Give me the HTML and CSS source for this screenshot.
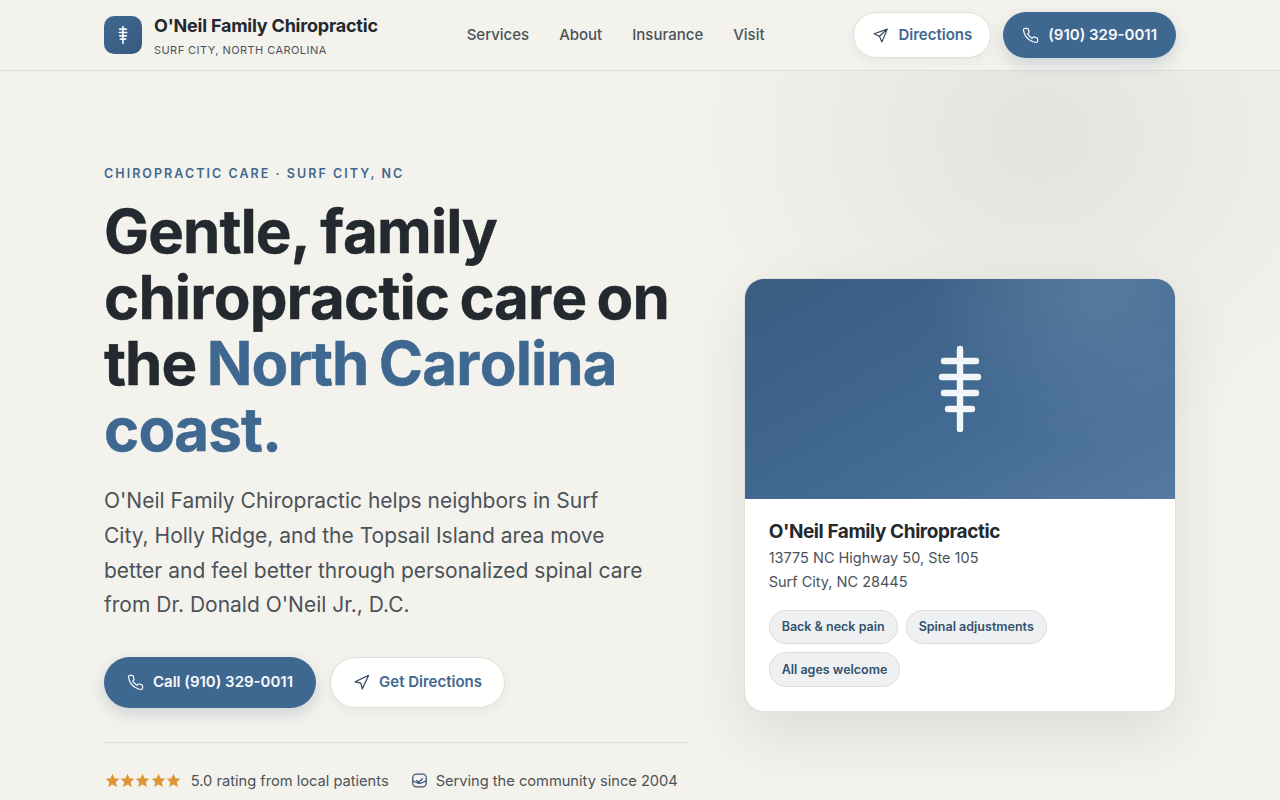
FILE: index.html
```html
<!DOCTYPE html>
<html lang="en">
<head>
<meta charset="utf-8">
<title>O'Neil Family Chiropractic</title>
<link rel="stylesheet" href="styles.css">
</head>
<body>
<svg class="defs" width="0" height="0" aria-hidden="true">
  <defs>
    <symbol id="phone" viewBox="0 0 24 24"><path d="M22 16.9v3a2 2 0 0 1-2.2 2 19.8 19.8 0 0 1-8.6-3.1 19.5 19.5 0 0 1-6-6 19.8 19.8 0 0 1-3.1-8.7A2 2 0 0 1 4.1 2h3a2 2 0 0 1 2 1.7c.1 1 .4 1.9.7 2.8a2 2 0 0 1-.5 2.1L8.1 9.9a16 16 0 0 0 6 6l1.3-1.3a2 2 0 0 1 2.1-.4c.9.3 1.8.6 2.8.7a2 2 0 0 1 1.7 2z"/></symbol>
    <symbol id="nav" viewBox="0 0 24 24"><path d="M3 11 22 2l-9 19-2-8-8-2z"/></symbol>
    <symbol id="send" viewBox="0 0 24 24"><path d="M21.5 3 3 9.5l7.5 3.5 3.5 8zM21.5 3 10.5 13"/></symbol>
    <symbol id="spine" viewBox="0 0 24 24"><path d="M12 2v20M8 5h8M7.5 9h9M8 13h8M9 17h6"/></symbol>
    <symbol id="star" viewBox="0 0 24 24"><path d="M12 1l3.3 7.200 7.700.9-5.700 5.300 1.600 7.800L12 18.200 5.100 22.200l1.600-7.800L1 9.100l7.700-.9z"/></symbol>
  </defs>
</svg>
<header class="topbar">
  <div class="wrap topbar-row">
    <a class="brand" href="#">
      <span class="brand-mark"><svg class="spine-small"><use href="#spine"/></svg></span>
      <span class="brand-text">
        <span class="brand-name">O'Neil Family Chiropractic</span>
        <span class="brand-sub">SURF CITY, NORTH CAROLINA</span>
      </span>
    </a>
    <nav class="nav">
      <a href="#">Services</a>
      <a href="#">About</a>
      <a href="#">Insurance</a>
      <a href="#">Visit</a>
    </nav>
    <div class="top-actions">
      <a class="btn btn-light btn-sm" href="#"><svg class="ico"><use href="#send"/></svg><span class="btn-label">Directions</span></a>
      <a class="btn btn-dark btn-sm" href="#"><svg class="ico"><use href="#phone"/></svg><span class="btn-label">(910) 329-0011</span></a>
    </div>
  </div>
</header>
<main class="hero">
  <div class="wrap hero-grid">
    <section class="hero-copy">
      <p class="eyebrow">CHIROPRACTIC CARE · SURF CITY, NC</p>
      <h1>Gentle, family chiropractic care on the <span class="accent">North Carolina coast.</span></h1>
      <p class="lead">O'Neil Family Chiropractic helps neighbors in Surf City, Holly Ridge, and the Topsail Island area move better and feel better through personalized spinal care from Dr. Donald O'Neil Jr., D.C.</p>
      <div class="cta-row">
        <a class="btn btn-dark btn-lg" href="#"><svg class="ico"><use href="#phone"/></svg><span class="btn-label">Call (910) 329-0011</span></a>
        <a class="btn btn-light btn-lg" href="#"><svg class="ico"><use href="#nav"/></svg><span class="btn-label">Get Directions</span></a>
      </div>
      <div class="trust">
        <span class="trust-item">
          <span class="stars">
            <svg class="star"><use href="#star"/></svg>
            <svg class="star"><use href="#star"/></svg>
            <svg class="star"><use href="#star"/></svg>
            <svg class="star"><use href="#star"/></svg>
            <svg class="star"><use href="#star"/></svg>
          </span>
          5.0 rating from local patients</span>
        <span class="trust-item">
          <svg class="ico-since" viewBox="0 0 24 24"><rect x="2.5" y="3" width="19" height="18" rx="5"/><path d="M2.500 13c3 0 6 3 9.500 3s6.500-3 9.500-3M8 12l3 2.500 5-5"/></svg>
          Serving the community since 2004</span>
      </div>
    </section>
    <aside class="card">
      <div class="card-top"><svg class="spine-large"><use href="#spine"/></svg></div>
      <div class="card-body">
        <h2>O'Neil Family Chiropractic</h2>
        <p class="addr">13775 NC Highway 50, Ste 105<br>Surf City, NC 28445</p>
        <div class="tags">
          <span class="tag">Back &amp; neck pain</span>
          <span class="tag">Spinal adjustments</span>
          <span class="tag">All ages welcome</span>
        </div>
      </div>
    </aside>
  </div>
</main>
</body>
</html>
```
FILE: styles.css
```css
* { box-sizing: border-box; }
html, body { margin: 0; height: 800px; overflow: hidden; }
body {
  background: #f4f2ec;
  color: #23292e;
  font-family: Inter, "Liberation Sans", sans-serif;
  text-rendering: optimizeLegibility;
}
a { color: inherit; text-decoration: none; }
.defs { position: absolute; }
.wrap { width: 1072px; margin: 0 auto; }

.topbar { height: 71px; border-bottom: 1px solid #dedcd6; background: #f4f2ec; }
.topbar-row { height: 70px; display: flex; align-items: center; justify-content: space-between; }
.brand { display: flex; align-items: center; gap: 12px; }
.brand-mark {
  width: 38px; height: 38px; border-radius: 10px;
  background: linear-gradient(135deg, #3f6891, #365a80);
  display: flex; align-items: center; justify-content: center;
}
.spine-small { width: 20px; height: 20px; fill: none; stroke: #f5f7f9; stroke-width: 2; stroke-linecap: round; }
.brand-text { display: flex; flex-direction: column; }
.brand-name { font-size: 18px; font-weight: 700; letter-spacing: -0.22px; line-height: 24px; margin-top: 1px; }
.brand-sub { font-size: 11px; letter-spacing: 0.44px; color: #4b5258; line-height: 16px; margin-top: 4px; }
.nav { display: flex; gap: 30px; font-size: 15px; font-weight: 500; color: #4b5258; margin-bottom: 2px; }
.top-actions { display: flex; gap: 12px; }

.btn { display: inline-flex; align-items: center; justify-content: center; border-radius: 999px; font-weight: 600; gap: 9px; font-size: 15px; border: 1px solid transparent; }
.btn-label { margin-bottom: 2px; }
.btn-dark { background: #3f6891; color: #f8fafb; box-shadow: 0 6px 16px rgba(63,104,145,.22); }
.btn-light { background: #fff; color: #3f6891; border-color: #e1dfd9; box-shadow: 0 4px 12px rgba(35,41,46,.05); }
.btn-sm { height: 46px; padding: 0 18px; }
.btn-lg { height: 51px; padding: 0 22px; }
.ico { width: 17px; height: 17px; fill: none; stroke: currentColor; stroke-width: 1.7; stroke-linecap: round; stroke-linejoin: round; }
.btn-light .ico { color: #33465a; }

.hero {
  height: 729px;
  background: radial-gradient(ellipse 360px 320px at 1040px 65px, rgba(60,80,90,.09), rgba(60,80,90,0));
}
.hero-grid {
  display: grid; grid-template-columns: minmax(0, 1.35fr) minmax(0, 1fr); column-gap: 56px; align-items: center;
  padding-top: 93px;
}
.eyebrow { margin: 0 0 14px; font-size: 12.5px; font-weight: 600; letter-spacing: 2.05px; color: #3f6891; line-height: 20px; }
h1 { margin: 0 0 22.3px; font-size: 60px; font-weight: 700; line-height: 66px; letter-spacing: -0.9px; word-spacing: -3px; font-kerning: none; -webkit-text-stroke: 0.4px currentColor; color: #23292e; }
.accent { color: #3f6891; }
.lead { margin: 0 0 33.7px; font-size: 21px; line-height: 34.65px; color: #4b5258; width: 542px; }
.cta-row { display: flex; gap: 14px; }
.trust { margin-top: 34px; border-top: 1px solid #dedcd6; padding-top: 28px; padding-bottom: 35px; display: flex; gap: 22px; font-size: 14.65px; color: #4b5258; line-height: 20px; white-space: nowrap; }
.trust-item { display: inline-flex; align-items: center; gap: 8px; }
.stars { display: inline-flex; gap: .4px; margin: 0 1.7px 0 .5px; }
.star { width: 15px; height: 15px; fill: #dd9736; }
.ico-since { width: 17px; height: 17px; fill: none; stroke: #3a5676; stroke-width: 1.8; stroke-linecap: round; stroke-linejoin: round; }

.card { background: #fff; border: 1px solid #e1dfd9; border-radius: 20px; overflow: hidden; box-shadow: 0 24px 60px rgba(35,41,46,.10); }
.card-top {
  height: 220px;
  background:
    radial-gradient(circle at 82% 0%, rgba(255,255,255,.12), rgba(255,255,255,0) 42%),
    linear-gradient(150deg, #3a5d82 5%, #436b94 60%, #567aa2 100%);
  display: flex; align-items: center; justify-content: center;
}
.spine-large { width: 96px; height: 96px; fill: none; stroke: #f3f6f9; stroke-width: 1.6; stroke-linecap: round; }
.card-body { padding: 20px 24px 24px; }
h2 { margin: 0; font-size: 19px; font-weight: 700; letter-spacing: -0.42px; line-height: 26px; }
.addr { margin: 1px 0 16px; font-size: 14.5px; line-height: 24px; color: #4b5258; }
.tags { display: flex; flex-wrap: wrap; gap: 8px; }
.tag { height: 34.5px; padding: 0 12px 1px; display: inline-flex; align-items: center; border-radius: 999px; background: #eef0f2; border: 1px solid #dcdcd9; font-size: 12.5px; font-weight: 600; color: #33506e; }
```
